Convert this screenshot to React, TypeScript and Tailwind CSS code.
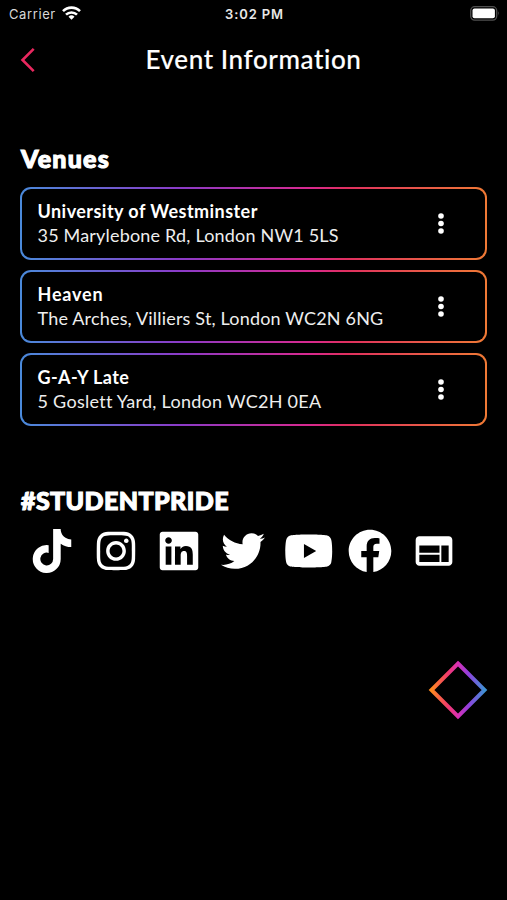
import React from 'react';
import { FaTiktok, FaInstagram, FaLinkedin, FaTwitter, FaYoutube, FaFacebook } from 'react-icons/fa';
import { MdWeb } from 'react-icons/md';

interface Venue {
    name: string;
    address: string;
    nameClass: string;
    addressClass: string;
}

const venues: Venue[] = [
    { name: 'University of Westminster', address: '35 Marylebone Rd, London NW1 5LS', nameClass: 'tracking-[0.45px]', addressClass: 'tracking-[0.19px]' },
    { name: 'Heaven', address: 'The Arches, Villiers St, London WC2N 6NG', nameClass: 'tracking-[0.8px]', addressClass: 'tracking-[0.18px]' },
    { name: 'G-A-Y Late', address: '5 Goslett Yard, London WC2H 0EA', nameClass: 'tracking-[0.4px]', addressClass: 'tracking-[0.27px]' },
];

const StatusBar: React.FC = () => (
    <div className="grid h-7 grid-cols-3 items-center pl-[9px] pr-[7px] font-['Inter',sans-serif] text-[13px] leading-7">
        <div className="flex items-center gap-[6px]">
            <span className="tracking-[0.6px] text-[#d8d8d8]">Carrier</span>
            <svg className="-mt-[2px]" width="19" height="14" viewBox="0 0 19 14" fill="none" stroke="#fff" strokeWidth="2.6">
                <path d="M1 5.2a12 12 0 0 1 17 0" />
                <path d="M4 8.7a7.8 7.8 0 0 1 11 0" />
                <path d="M9.5 13.8l-3-3.1a4.3 4.3 0 0 1 6 0z" fill="#fff" stroke="none" />
            </svg>
        </div>
        <span className="text-center font-semibold tracking-[0.9px] whitespace-nowrap text-[#e8e8e8]">3:02 PM</span>
        <svg className="-mt-[2px] justify-self-end" width="30" height="15" viewBox="0 0 30 15">
            <rect x=".7" y=".7" width="26" height="13.4" rx="4" fill="none" stroke="#505050" strokeWidth="1.3" />
            <rect x="2.5" y="2.5" width="22.4" height="9.8" rx="2" fill="#fff" />
            <path d="M28.2 5.2q1.6 2.2 0 4.4z" fill="#606060" />
        </svg>
    </div>
);

const VenueCard: React.FC<{ venue: Venue }> = ({ venue }) => (
    <div className="h-[73px] rounded-[11px] bg-[linear-gradient(90deg,#4a8adb_0%,#8a3bc8_34%,#d8298f_62%,#e0305f_70%,#f07a35_100%)] p-[2px]">
        <div className="flex h-full items-center justify-between rounded-[9px] bg-black pl-[15.5px] pr-[41px]">
            <div className="-mt-[2px] whitespace-nowrap text-[18px] leading-[24px]">
                <div className={`font-bold ${venue.nameClass}`}>{venue.name}</div>
                <div className={`text-[#eeeeee] ${venue.addressClass}`}>{venue.address}</div>
            </div>
            <svg width="6" height="21" viewBox="0 0 6 21" fill="#fff">
                <circle cx="3" cy="3" r="2.8" />
                <circle cx="3" cy="10.5" r="2.8" />
                <circle cx="3" cy="18" r="2.8" />
            </svg>
        </div>
    </div>
);

const SocialLinks: React.FC = () => (
    <div className="mt-[13px] ml-[30px] flex h-11 items-center gap-[19.6px] text-[44px]">
        <FaTiktok />
        <FaInstagram />
        <FaLinkedin />
        <FaTwitter />
        <FaYoutube className="-mr-[5.5px] h-11 w-[49.5px]" />
        <FaFacebook />
        <MdWeb />
    </div>
);

const App: React.FC = () => {
    return (
        <div className="flex h-[900px] w-[507px] flex-col overflow-hidden bg-black font-['Lato',sans-serif] text-white">
            <StatusBar />
            <header className="grid h-16 grid-cols-[60px_1fr_60px] items-center">
                <svg className="ml-5" width="16" height="26" viewBox="0 0 16 26" fill="none" stroke="#e9285f" strokeWidth="2.6">
                    <path d="M13.7 1.8L2.5 13l11.2 11.2" />
                </svg>
                <h1 className="-mt-[2px] text-center text-[26px] leading-[32px] font-medium tracking-[0.6px] [-webkit-text-stroke:0.15px_white]">Event Information</h1>
            </header>

            <section className="mt-[51px] px-5">
                <h2 className="h-[31px] pl-px text-[25px] leading-[31px] font-black tracking-[1.2px] [-webkit-text-stroke:1.1px_white]">Venues</h2>
                <div className="mt-[13px] flex flex-col gap-[10px]">
                    {venues.map(v => <VenueCard key={v.name} venue={v} />)}
                </div>
            </section>

            <section className="mt-[59px]">
                <h2 className="h-[31px] pl-[21px] text-[25px] leading-[31px] font-black tracking-[0.4px] [-webkit-text-stroke:1.1px_white]">#STUDENTPRIDE</h2>
                <SocialLinks />
            </section>

            <svg className="mt-[87px] ml-[428px]" width="60" height="60" viewBox="0 0 60 60" fill="none">
                <defs>
                    <linearGradient id="diamond" x1="0" y1="0" x2="1" y2="0">
                        <stop offset="0" stopColor="#ff8a1f" />
                        <stop offset=".3" stopColor="#f23b6a" />
                        <stop offset=".5" stopColor="#d92fb4" />
                        <stop offset=".7" stopColor="#8f40dd" />
                        <stop offset="1" stopColor="#3f92d4" />
                    </linearGradient>
                </defs>
                <path d="M30 3.5L56.5 30L30 56.5L3.5 30Z" stroke="url(#diamond)" strokeWidth="4" />
            </svg>
        </div>
    );
};

export default App;
